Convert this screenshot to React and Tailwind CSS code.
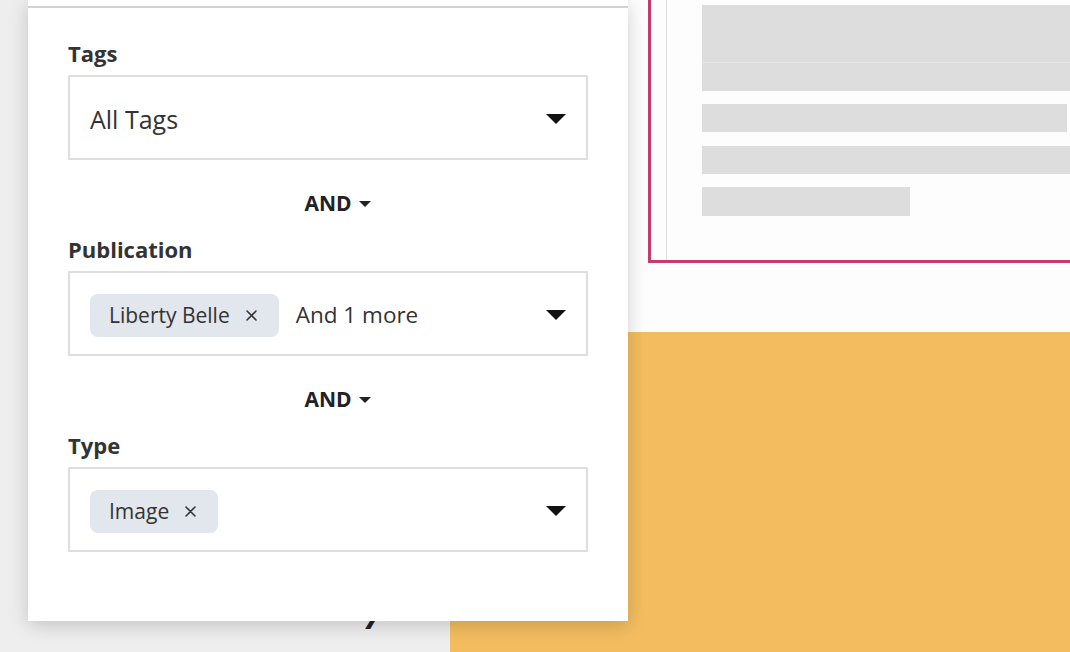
import React from "react";

const font = { fontFamily: "'Open Sans', Lato, sans-serif" };

function Caret({ className = "" }) {
  return (
    <svg className={className} width="20" height="10" viewBox="0 0 20 10">
      <path d="M0 0 L20 0 L10 10 Z" fill="#111" />
    </svg>
  );
}

function XIcon() {
  return (
    <svg width="11" height="11" viewBox="0 0 11 11" className="shrink-0">
      <path d="M1 1 L10 10 M10 1 L1 10" stroke="#333" strokeWidth="1.6" strokeLinecap="round" />
    </svg>
  );
}

function Chip({ label }) {
  return (
    <div className="flex items-center h-[43px] rounded-[8px] bg-[#e2e6ed] pl-[19px] pr-[22px] gap-[16px]">
      <span className="text-[21px] text-[#333] leading-none">{label}</span>
      <XIcon />
    </div>
  );
}

function Box({ children }) {
  return (
    <div className="mt-[8px] h-[85px] border-2 border-[#dedede] flex items-center pl-[20px] pr-[20px] pt-[3px]">
      <div className="flex-1 flex items-center">{children}</div>
      <Caret />
    </div>
  );
}

function Label({ children }) {
  return (
    <div className="h-[27px] leading-[27px] text-[22px] font-bold text-[#333]">{children}</div>
  );
}

function And() {
  return (
    <div className="mt-[31px] h-[25px] flex justify-center">
      <div className="relative text-[21px] font-bold leading-[25px] text-[#222]">
        AND
        <svg className="absolute left-[calc(100%+7px)] top-[10px]" width="12" height="6" viewBox="0 0 12 6">
          <path d="M0 0 L12 0 L6 6 Z" fill="#222" />
        </svg>
      </div>
    </div>
  );
}

export default function App() {
  return (
    <div className="relative w-[1070px] h-[652px] overflow-hidden bg-[#eeeeee] flex" style={font}>
      {/* background page */}
      <div className="w-[450px] shrink-0 h-full bg-[#eeeeee] pt-[595px] pl-[364px]">
        <span className="text-[30px] font-bold italic text-[#222]">7</span>
      </div>
      <div className="flex-1 min-w-0 flex flex-col">
        <div className="h-[332px] bg-[#fdfdfd] overflow-hidden">
          <div className="ml-[198px] w-[600px] h-[263px] border-l-[3px] border-b-[3px] border-[#c73b68] flex pl-[15px]">
            <div className="h-full border-l border-[#dddddd] pl-[35px] flex-1">
              <div className="pt-[5px] flex flex-col">
                <div className="h-[57px] bg-[#dddddd]" />
                <div className="h-[1px] bg-[#e5e5e5]" />
                <div className="h-[28px] bg-[#dddddd]" />
                <div className="mt-[13px] h-[28px] w-[365px] bg-[#dddddd]" />
                <div className="mt-[14px] h-[28px] bg-[#dddddd]" />
                <div className="mt-[13px] h-[29px] w-[208px] bg-[#dddddd]" />
              </div>
            </div>
          </div>
        </div>
        <div className="flex-1 bg-[#f3bd5f]" />
      </div>

      {/* popover panel */}
      <div className="absolute left-[28px] top-0 w-[600px] h-[621px] bg-white shadow-[0_4px_18px_rgba(0,0,0,0.18)]">
        <div className="h-[8px] border-b-2 border-[#d2d2d2]" />
        <div className="px-[40px] pt-[32px]">
          <Label>Tags</Label>
          <Box>
            <span className="text-[25px] text-[#333] leading-none">All Tags</span>
          </Box>
          <And />
          <div className="mt-[20px]">
            <Label>Publication</Label>
          </div>
          <Box>
            <Chip label="Liberty Belle" />
            <span className="ml-[17px] text-[22.5px] text-[#333] leading-none">And 1 more</span>
          </Box>
          <And />
          <div className="mt-[20px]">
            <Label>Type</Label>
          </div>
          <Box>
            <Chip label="Image" />
          </Box>
        </div>
      </div>
    </div>
  );
}
